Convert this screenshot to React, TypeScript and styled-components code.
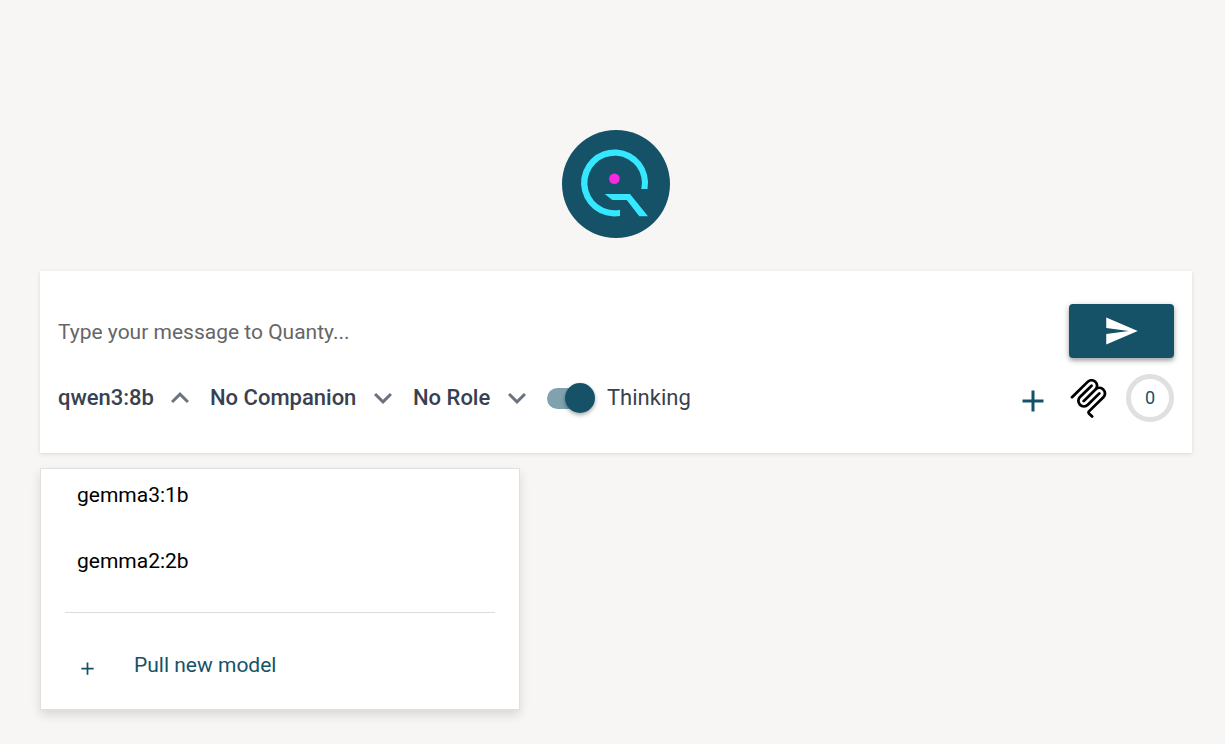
import React, { useState } from "react";
import styled, { createGlobalStyle } from "styled-components";

const GlobalStyle = createGlobalStyle`
  *, *::before, *::after { box-sizing: border-box; }
  body {
    margin: 0;
    background: #f7f6f5;
    color: #374151;
    font-family: Roboto, "Liberation Sans", sans-serif;
    font-size: 21px;
    line-height: 32px;
  }
  button, input, select { font: inherit; color: inherit; }
`;

const Page = styled.main`
  min-height: 100vh;
  padding: 130px 33px 33px 40px;
  display: flex;
  flex-direction: column;
`;

const Logo = styled.svg`
  width: 108px;
  height: 108px;
  align-self: center;
  margin-bottom: 33px;
`;

const Composer = styled.form`
  display: flex;
  flex-direction: column;
  gap: 16px;
  padding: 33px 18px 31px;
  background: #fff;
  box-shadow: 0 1px 4px rgba(0, 0, 0, 0.12);
`;

const MessageRow = styled.div`
  display: flex;
  align-items: center;
  gap: 24px;
`;

const MessageInput = styled.input`
  flex: 1;
  min-width: 0;
  height: 54px;
  padding: 2px 0 0;
  border: 0;
  outline: 0;
  background: transparent;
  &::placeholder { color: #666; opacity: 1; }
`;

const SendButton = styled.button`
  display: grid;
  place-items: center;
  width: 105px;
  height: 54px;
  padding: 0;
  border: 0;
  border-radius: 4px;
  background: #155268;
  color: #fff;
  cursor: pointer;
  box-shadow: 0 2px 6px rgba(0, 0, 0, 0.3), 0 3px 3px rgba(0, 0, 0, 0.12);
`;

const Toolbar = styled.div`
  display: flex;
  align-items: center;
  justify-content: space-between;
  height: 48px;
`;

const Options = styled.div`
  display: flex;
  align-items: center;
  gap: 12px;
`;

const Actions = styled.div`
  display: flex;
  align-items: center;
  gap: 18px;
`;

const Icon = styled.svg<{ $size: number }>`
  display: block;
  flex: none;
  width: ${(p) => p.$size}px;
  height: ${(p) => p.$size}px;
  fill: currentColor;
`;

const Chevron = styled(Icon)`
  color: #6b7280;
  pointer-events: none;
`;

const ModelButton = styled.button`
  display: flex;
  align-items: center;
  gap: 8px;
  padding: 0;
  border: 0;
  background: none;
  font-size: 22px;
  font-weight: 500;
  cursor: pointer;
`;

const SelectBox = styled.div`
  display: grid;
  align-items: center;
  & > * { grid-area: 1 / 1; }
  ${Chevron} { justify-self: end; }
`;

const Select = styled.select`
  appearance: none;
  padding: 0 44px 0 0;
  border: 0;
  outline: 0;
  background: none;
  font-size: 22px;
  font-weight: 500;
  cursor: pointer;
`;

const ToggleLabel = styled.label`
  display: flex;
  align-items: center;
  gap: 12px;
  font-size: 22px;
  cursor: pointer;
`;

const Toggle = styled.input`
  appearance: none;
  display: flex;
  align-items: center;
  width: 48px;
  height: 30px;
  margin: 0;
  cursor: pointer;
  &::before {
    content: "";
    width: 42px;
    height: 21px;
    border-radius: 11px;
    background: #9e9e9e;
  }
  &::after {
    content: "";
    width: 30px;
    height: 30px;
    margin-left: -42px;
    border-radius: 50%;
    background: #fff;
    box-shadow: 0 2px 4px rgba(0, 0, 0, 0.35);
  }
  &:checked::before { background: #80a2ae; }
  &:checked::after { margin-left: -24px; background: #155268; }
`;

const IconButton = styled.button`
  display: grid;
  place-items: center;
  padding: 0;
  border: 0;
  background: none;
  color: #000;
  cursor: pointer;
`;

const AddButton = styled(IconButton)`
  padding-top: 6px;
  color: #155268;
`;

const Counter = styled.output`
  display: grid;
  place-items: center;
  width: 48px;
  height: 48px;
  border: 5px solid #e0e0e0;
  border-radius: 50%;
  color: #155268;
  font-size: 18px;
`;

const Menu = styled.div`
  width: 480px;
  max-width: 100%;
  margin-top: 15px;
  padding: 1px 24px 19px;
  border: 1px solid #e0e0e0;
  background: #fff;
  box-shadow: 0 5px 10px rgba(0, 0, 0, 0.12);
`;

const MenuList = styled.div`
  display: flex;
  flex-direction: column;
  gap: 16px;
`;

const MenuItem = styled.button<{ $accent?: boolean }>`
  display: flex;
  align-items: center;
  gap: 36px;
  width: 100%;
  height: 50px;
  padding: 0 12px;
  border: 0;
  background: none;
  color: ${(p) => (p.$accent ? "#155268" : "#000")};
  text-align: left;
  cursor: pointer;
`;

const MenuIcon = styled.span`
  padding-top: 6px;
`;

const Divider = styled.hr`
  width: 100%;
  height: 1px;
  margin: 26px 0 27px;
  border: 0;
  background: #dcdcdc;
`;

const PlusIcon = ({ size }: { size: number }) => (
  <Icon $size={size} viewBox="0 0 24 24" aria-hidden="true">
    <path d="M19 13h-6v6h-2v-6H5v-2h6V5h2v6h6v2z" />
  </Icon>
);

const ChevronIcon = ({ up = false }: { up?: boolean }) => (
  <Chevron $size={36} viewBox="0 0 24 24" aria-hidden="true">
    <path
      d={
        up
          ? "M7.41 15.41L12 10.83l4.59 4.58L18 14l-6-6-6 6z"
          : "M7.41 8.59L12 13.17l4.59-4.58L18 10l-6 6-6-6z"
      }
    />
  </Chevron>
);

const McpIcon = () => (
  <Icon $size={39} viewBox="0 0 24 24" aria-hidden="true">
    <path d="M15.688 2.343a2.588 2.588 0 00-3.61 0l-9.626 9.44a.863.863 0 01-1.203 0 .823.823 0 010-1.18l9.626-9.44a4.313 4.313 0 016.016 0 4.116 4.116 0 011.204 3.54 4.3 4.3 0 013.609 1.18l.05.05a4.115 4.115 0 010 5.9l-8.706 8.537a.274.274 0 000 .393l1.788 1.754a.823.823 0 010 1.18.863.863 0 01-1.203 0l-1.788-1.753a1.92 1.92 0 010-2.754l8.706-8.538a2.47 2.47 0 000-3.54l-.05-.049a2.588 2.588 0 00-3.607-.003l-7.172 7.034-.002.002-.098.097a.863.863 0 01-1.204 0 .823.823 0 010-1.18l7.273-7.133a2.47 2.47 0 00-.003-3.537z" />
    <path d="M14.485 4.703a.823.823 0 000-1.18.863.863 0 00-1.204 0l-7.119 6.982a4.115 4.115 0 000 5.9 4.314 4.314 0 006.016 0l7.12-6.982a.823.823 0 000-1.18.863.863 0 00-1.204 0l-7.119 6.982a2.588 2.588 0 01-3.61 0 2.47 2.47 0 010-3.54l7.12-6.982z" />
  </Icon>
);

const OptionSelect = ({ label, value }: { label: string; value: string }) => (
  <SelectBox>
    <Select aria-label={label} defaultValue={value}>
      <option>{value}</option>
    </Select>
    <ChevronIcon />
  </SelectBox>
);

const models = ["gemma3:1b", "gemma2:2b"];

export default function App() {
  const [message, setMessage] = useState("");
  const [model, setModel] = useState("qwen3:8b");
  const [menuOpen, setMenuOpen] = useState(true);
  const [thinking, setThinking] = useState(true);

  const choose = (name: string) => {
    setModel(name);
    setMenuOpen(false);
  };

  return (
    <>
      <GlobalStyle />
      <Page>
        <Logo viewBox="0 0 108 108" role="img" aria-label="Quanty">
          <circle cx="54" cy="54" r="54" fill="#155268" />
          <path
            d="M58 86V79.8A27.3 27.3 0 1 1 79.3 59H85.5A33.5 33.5 0 1 0 58 86z"
            fill="#36e8ff"
          />
          <path d="M42.7 64H68L86 86.3H77.3L64.7 70H50.3z" fill="#36e8ff" />
          <circle cx="52.4" cy="48.7" r="5.3" fill="#fa28e4" />
        </Logo>

        <Composer onSubmit={(e) => e.preventDefault()}>
          <MessageRow>
            <MessageInput
              type="text"
              aria-label="Message"
              placeholder="Type your message to Quanty..."
              value={message}
              onChange={(e) => setMessage(e.target.value)}
            />
            <SendButton type="submit" aria-label="Send">
              <Icon $size={36} viewBox="0.5 0 24 24" aria-hidden="true">
                <path d="M2.01 21L23 12 2.01 3 2 10l15 2-15 2z" />
              </Icon>
            </SendButton>
          </MessageRow>
          <Toolbar>
            <Options>
              <ModelButton
                type="button"
                aria-haspopup="menu"
                aria-expanded={menuOpen}
                onClick={() => setMenuOpen(!menuOpen)}
              >
                {model}
                <ChevronIcon up={menuOpen} />
              </ModelButton>
              <OptionSelect label="Companion" value="No Companion" />
              <OptionSelect label="Role" value="No Role" />
              <ToggleLabel>
                <Toggle
                  type="checkbox"
                  checked={thinking}
                  onChange={(e) => setThinking(e.target.checked)}
                />
                Thinking
              </ToggleLabel>
            </Options>
            <Actions>
              <AddButton type="button" aria-label="Add">
                <PlusIcon size={36} />
              </AddButton>
              <IconButton type="button" aria-label="MCP servers">
                <McpIcon />
              </IconButton>
              <Counter>0</Counter>
            </Actions>
          </Toolbar>
        </Composer>

        {menuOpen && (
          <Menu role="menu">
            <MenuList>
              {models.map((name) => (
                <MenuItem
                  key={name}
                  type="button"
                  role="menuitem"
                  onClick={() => choose(name)}
                >
                  {name}
                </MenuItem>
              ))}
            </MenuList>
            <Divider />
            <MenuItem type="button" role="menuitem" $accent>
              <MenuIcon>
                <PlusIcon size={21} />
              </MenuIcon>
              Pull new model
            </MenuItem>
          </Menu>
        )}
      </Page>
    </>
  );
}
